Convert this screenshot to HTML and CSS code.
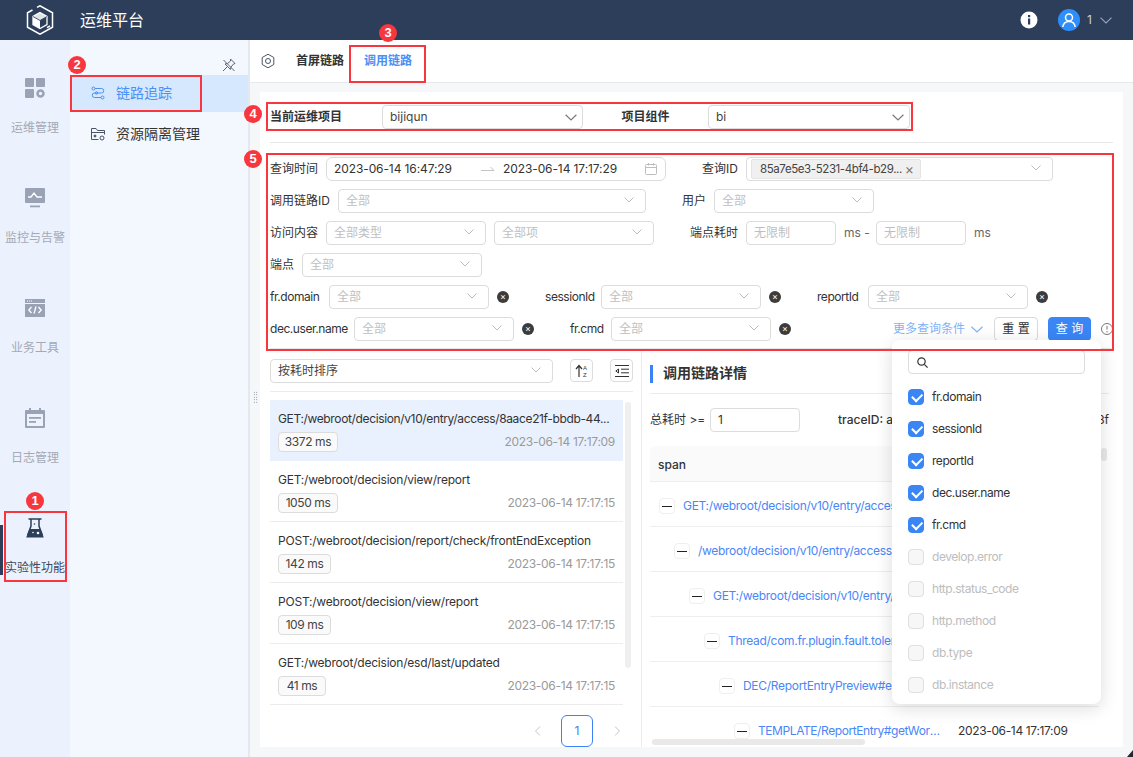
FILE: index.html
```html
<!DOCTYPE html>
<html lang="zh">
<head>
<meta charset="utf-8">
<title>运维平台</title>
<link rel="stylesheet" href="styles.css">
</head>
<body>
<div class="app">
  <header class="top">
    <svg class="logo" width="28" height="30" viewBox="0 0 28 30" fill="none" stroke="#fff"><path d="M11 2.400 14 .8l12.500 7v14.400L14 29.200 1.500 22.200V7.800l5-2.800M24 21l-3 1.700M8 24.500" stroke-width="1.500"/><path d="M14 7.500 21 11.500v8L14 23.500 7 19.500v-8z" stroke-width="1.300"/><path d="M7 11.500l7 4v8l-7-4z" fill="#fff" stroke="none"/><path d="M7 11.500 14 7.500l7 4-7 4z" fill="#fff" stroke="none" opacity=".85"/><path d="M7 11.500l7 4 7-4" stroke="#2c3e5a" stroke-width=".8"/></svg>
    <div class="brand">运维平台</div>
    <div class="top-right">
      <svg class="info" width="18" height="18" viewBox="0 0 18 18"><circle cx="9" cy="9" r="8.500" fill="#fff"/><rect x="8" y="7.500" width="2.200" height="6" fill="#2c3e5a"/><rect x="8" y="4" width="2.200" height="2.200" fill="#2c3e5a"/></svg>
      <svg class="avatar" width="22" height="22" viewBox="0 0 22 22" fill="none" stroke="#fff" stroke-width="1.500"><circle cx="11" cy="11" r="11" fill="#2f8ffa" stroke="none"/><circle cx="11" cy="8.500" r="3.500"/><path d="M4.800 18c.5-3.500 3-5.500 6.200-5.500s5.700 2 6.200 5.500"/></svg>
      <span class="uid">1</span>
      <svg width="12" height="7" viewBox="0 0 12 7" fill="none" stroke="#9aa5b8" stroke-width="1.100"><path d="M.5.700 6 6l5.500-5.300"/></svg>
    </div>
  </header>
  <div class="body">
    <nav class="rail">
      <a class="rail-item">
        <svg width="20" height="20" viewBox="0 0 20 20" fill="#9aa3b5"><rect x="0" y="0" width="9" height="9" rx="1"/><rect x="11" y="0" width="9" height="9" rx="1"/><rect x="0" y="11" width="9" height="9" rx="1"/><circle cx="15.500" cy="15.500" r="3" fill="none" stroke="#9aa3b5" stroke-width="2.500"/></svg>
        <span>运维管理</span>
      </a>
      <a class="rail-item">
        <svg width="20" height="20" viewBox="0 0 20 20"><rect x="0" y="0" width="20" height="15" rx="1" fill="#9aa3b5"/><path d="M3 9h3l3-4 3 4h5" fill="none" stroke="#fff" stroke-width="1.300"/><rect x="5" y="17.500" width="10" height="1.800" fill="#9aa3b5"/></svg>
        <span>监控与告警</span>
      </a>
      <a class="rail-item">
        <svg width="20" height="20" viewBox="0 0 20 20"><rect x="0" y="1" width="20" height="18" fill="#9aa3b5"/><rect x="0" y="5" width="20" height="1" fill="#edf3fd"/><path d="M6.500 9 3.800 12l2.700 3M13.500 9l2.700 3-2.700 3M11 8.500 9 15.500" fill="none" stroke="#fff" stroke-width="1.300"/><path d="M2 3h5" stroke="#fff" stroke-dasharray="1 1"/></svg>
        <span>业务工具</span>
      </a>
      <a class="rail-item">
        <svg width="20" height="20" viewBox="0 0 20 20"><rect x="0" y="2" width="20" height="18" rx="1" fill="#9aa3b5"/><rect x="4" y="0" width="2" height="4" fill="#9aa3b5"/><rect x="14" y="0" width="2" height="4" fill="#9aa3b5"/><rect x="2" y="6" width="16" height="12" fill="#edf3fd"/><rect x="4" y="9" width="12" height="1.800" fill="#9aa3b5"/><rect x="4" y="13" width="7" height="1.800" fill="#9aa3b5"/></svg>
        <span>日志管理</span>
      </a>
      <a class="rail-item active">
        <svg width="20" height="20" viewBox="0 0 20 20" fill="none" stroke="#2c3e5a" stroke-width="1.500"><path d="M3.500 1h13M6 1v7L2.500 17.500M14 1v7l3.500 9.500"/><path d="M4.800 11h10.400L18.800 19.500H1.200z" fill="#2c3e5a" stroke="none"/><circle cx="13" cy="15" r="1.300" fill="#fff" stroke="none"/><circle cx="8" cy="14.500" r=".8" fill="#fff" stroke="none"/><circle cx="9.500" cy="6" r=".8" fill="#2c3e5a" stroke="none"/></svg>
        <span>实验性功能</span>
      </a>
    </nav>
    <aside class="menu">
      <div class="pin-row">
        <svg width="14" height="14" viewBox="0 0 14 14" fill="none" stroke="#5b6577"><path d="M8.500 1 13 5.500l-1.500.5-2.500 3-.5 2.500L3 6l2.500-.5 3-2.500zM5.500 8.500 1 13M1.500 2l11 11"/></svg>
      </div>
      <a class="menu-item on">
        <svg width="14" height="14" viewBox="0 0 14 14" fill="none" stroke="currentColor"><circle cx="2.500" cy="2.500" r="1.500"/><path d="M4 2.500h6.500a2 2 0 0 1 0 4.500H3.500a2 2 0 0 0 0 4.500H10"/><circle cx="11.500" cy="11.500" r="1.500"/><circle cx="5.500" cy="7" r="1.200"/></svg>
        <span>链路追踪</span>
      </a>
      <a class="menu-item">
        <svg width="14" height="14" viewBox="0 0 14 14" fill="none" stroke="#4a5568"><path d="M.5 12.500v-11h4.500l1.500 2h7v4M.5 12.500h7M.5 5.500h13"/><circle cx="11" cy="11" r="2"/><circle cx="4" cy="9" r="1" fill="#4a5568"/></svg>
        <span>资源隔离管理</span>
      </a>
    </aside>
    <main class="main">
      <div class="tabs">
        <svg class="gear" width="16" height="16" viewBox="0 0 16 16" fill="none" stroke="#4a5568"><path d="M8 1.200 13.800 4.500v7L8 14.800 2.200 11.500v-7z" stroke-linejoin="round"/><circle cx="8" cy="8" r="2.500"/></svg>
        <a class="tab">首屏链路</a>
        <a class="tab sel">调用链路</a>
      </div>
      <div class="canvas">
        <div class="grip"></div>
        <section class="card">
          <div class="project">
            <label class="p-lbl">当前运维项目</label>
            <div class="sel-box dark w201">bijiqun<svg class="chev" width="12" height="7" viewBox="0 0 12 7" fill="none" stroke="#7a7a7a" stroke-width="1.200"><path d="M.6.700 6 6l5.400-5.300"/></svg></div>
            <label class="p-lbl2">项目组件</label>
            <div class="sel-box dark w202">bi<svg class="chev" width="12" height="7" viewBox="0 0 12 7" fill="none" stroke="#7a7a7a" stroke-width="1.200"><path d="M.6.700 6 6l5.400-5.300"/></svg></div>
          </div>
          <div class="filters">
            <div class="frow">
              <label class="l56">查询时间</label>
              <div class="range">
                <span class="r1">2023-06-14 16:47:29</span>
                <svg class="arrow" width="14" height="6" viewBox="0 0 14 6" fill="none" stroke="#c4c4c4"><path d="M0 4.500h13L9.500 1"/></svg>
                <span class="r2">2023-06-14 17:17:29</span>
                <svg class="cal" width="12" height="12" viewBox="0 0 12 12" fill="none" stroke="#bdbdbd"><rect x=".5" y="1.500" width="11" height="10" rx="1"/><path d="M.5 4.500h11M3.500 0v2.500M8.500 0v2.500"/></svg>
              </div>
              <label class="l44 ml36">查询ID</label>
              <div class="sel-box w307"><span class="chip"><span class="chip-t">85a7e5e3-5231-4bf4-b29...</span><i class="chip-x">×</i></span><svg class="chev sm" width="10" height="6" viewBox="0 0 10 6" fill="none" stroke="#bdbdbd"><path d="M.5.500 5 5 9.500.5"/></svg></div>
            </div>
            <div class="frow">
              <label class="l68">调用链路ID</label>
              <div class="sel-box ph w308">全部<svg class="chev sm" width="10" height="6" viewBox="0 0 10 6" fill="none" stroke="#bdbdbd"><path d="M.5.500 5 5 9.500.5"/></svg></div>
              <label class="l32 ml36">用户</label>
              <div class="sel-box ph w160">全部<svg class="chev sm" width="10" height="6" viewBox="0 0 10 6" fill="none" stroke="#bdbdbd"><path d="M.5.500 5 5 9.500.5"/></svg></div>
            </div>
            <div class="frow">
              <label class="l56">访问内容</label>
              <div class="sel-box ph w160">全部类型<svg class="chev sm" width="10" height="6" viewBox="0 0 10 6" fill="none" stroke="#bdbdbd"><path d="M.5.500 5 5 9.500.5"/></svg></div>
              <div class="sel-box ph w160 ml8">全部项<svg class="chev sm" width="10" height="6" viewBox="0 0 10 6" fill="none" stroke="#bdbdbd"><path d="M.5.500 5 5 9.500.5"/></svg></div>
              <label class="l56 ml36">端点耗时</label>
              <div class="num ph">无限制</div>
              <span class="unit u40">ms -</span>
              <div class="num ph">无限制</div>
              <span class="unit">ms</span>
            </div>
            <div class="frow">
              <label class="l32">端点</label>
              <div class="sel-box ph w180">全部<svg class="chev sm" width="10" height="6" viewBox="0 0 10 6" fill="none" stroke="#bdbdbd"><path d="M.5.500 5 5 9.500.5"/></svg></div>
            </div>
            <div class="frow">
              <label class="l59 lat">fr.domain</label>
              <div class="sel-box ph w160">全部<svg class="chev sm" width="10" height="6" viewBox="0 0 10 6" fill="none" stroke="#bdbdbd"><path d="M.5.500 5 5 9.500.5"/></svg></div>
              <i class="clr">×</i>
              <label class="l56 ml36 lat">sessionId</label>
              <div class="sel-box ph w160">全部<svg class="chev sm" width="10" height="6" viewBox="0 0 10 6" fill="none" stroke="#bdbdbd"><path d="M.5.500 5 5 9.500.5"/></svg></div>
              <i class="clr">×</i>
              <label class="l51 ml36 lat">reportId</label>
              <div class="sel-box ph w160">全部<svg class="chev sm" width="10" height="6" viewBox="0 0 10 6" fill="none" stroke="#bdbdbd"><path d="M.5.500 5 5 9.500.5"/></svg></div>
              <i class="clr">×</i>
            </div>
            <div class="frow">
              <label class="l84 lat">dec.user.name</label>
              <div class="sel-box ph w160">全部<svg class="chev sm" width="10" height="6" viewBox="0 0 10 6" fill="none" stroke="#bdbdbd"><path d="M.5.500 5 5 9.500.5"/></svg></div>
              <i class="clr">×</i>
              <label class="l41 ml36 lat">fr.cmd</label>
              <div class="sel-box ph w160">全部<svg class="chev sm" width="10" height="6" viewBox="0 0 10 6" fill="none" stroke="#bdbdbd"><path d="M.5.500 5 5 9.500.5"/></svg></div>
              <i class="clr">×</i>
              <div class="actions">
                <a class="more">更多查询条件</a>
                <svg class="more-chev" width="12" height="7" viewBox="0 0 12 7" fill="none" stroke="#7fb2fb" stroke-width="1.200"><path d="M.5.700 6 6l5.500-5.300"/></svg>
                <button class="btn">重 置</button>
                <button class="btn pri">查 询</button>
                <svg class="tip" width="12" height="12" viewBox="0 0 12 12" fill="none" stroke="#777"><circle cx="6" cy="6" r="5.500"/><path d="M6 2.800v3.800M6 8v1.400"/></svg>
              </div>
            </div>
          </div>
          <div class="split">
            <div class="left">
              <div class="lhead">
                <div class="sel-box dark w283">按耗时排序<svg class="chev sm" width="10" height="6" viewBox="0 0 10 6" fill="none" stroke="#bdbdbd"><path d="M.5.500 5 5 9.500.5"/></svg></div>
                <button class="ibtn"><svg width="14" height="14" viewBox="0 0 14 14" fill="none" stroke="#333" stroke-width="1.200"><path d="M4 13V2M1 5l3-3.500L7 5"/><text x="8" y="6" font-size="6" fill="#333" stroke="none" font-family="Liberation Sans">A</text><text x="8" y="13" font-size="6" fill="#333" stroke="none" font-family="Liberation Sans">Z</text></svg></button>
                <button class="ibtn"><svg width="14" height="12" viewBox="0 0 14 12" fill="none" stroke="#333"><path d="M0 .5h14M6 4.200h8M6 7.800h8M0 11.500h14M3.500 4 .8 6l2.700 2z"/></svg></button>
              </div>
              <div class="list-wrap">
                <ul class="list">
                  <li class="li cur"><div class="li-t long">GET:/webroot/decision/v10/entry/access/8aace21f-bbdb-44...</div><div class="li-b"><span class="tag w60">3372 ms</span><time>2023-06-14 17:17:09</time></div></li>
                  <li class="li"><div class="li-t">GET:/webroot/decision/view/report</div><div class="li-b"><span class="tag w60">1050 ms</span><time>2023-06-14 17:17:15</time></div></li>
                  <li class="li"><div class="li-t">POST:/webroot/decision/report/check/frontEndException</div><div class="li-b"><span class="tag w53">142 ms</span><time>2023-06-14 17:17:15</time></div></li>
                  <li class="li"><div class="li-t">POST:/webroot/decision/view/report</div><div class="li-b"><span class="tag w53">109 ms</span><time>2023-06-14 17:17:15</time></div></li>
                  <li class="li"><div class="li-t">GET:/webroot/decision/esd/last/updated</div><div class="li-b"><span class="tag w48">41 ms</span><time>2023-06-14 17:17:15</time></div></li>
                </ul>
                <div class="vbar"></div>
              </div>
              <div class="pager">
                <svg width="7" height="10" viewBox="0 0 7 10" fill="none" stroke="#c4c4c4"><path d="M6 .5 1.500 5 6 9.500"/></svg>
                <span class="page">1</span>
                <svg width="7" height="10" viewBox="0 0 7 10" fill="none" stroke="#c4c4c4"><path d="M1 .5 5.500 5 1 9.500"/></svg>
              </div>
            </div>
            <div class="right">
              <div class="rhead"><h2 class="rtitle">调用链路详情</h2></div>
              <div class="meta">
                <label class="m-lbl">总耗时 &gt;=</label>
                <div class="num m-num">1</div>
                <span class="trace">traceID: ac</span>
                <span class="trace-end">3f</span>
              </div>
              <div class="table">
                <div class="thead"><span>span</span></div>
                <div class="tr"><div class="td narrow d0"><i class="fold"></i><a>GET:/webroot/decision/v10/entry/access/8aace21f</a></div></div>
                <div class="tr"><div class="td narrow d1"><i class="fold"></i><a>/webroot/decision/v10/entry/access/8aace21f</a></div></div>
                <div class="tr"><div class="td narrow d2"><i class="fold"></i><a>GET:/webroot/decision/v10/entry/access/8aace21f</a></div></div>
                <div class="tr"><div class="td narrow d3"><i class="fold"></i><a>Thread/com.fr.plugin.fault.tolerance.run</a></div></div>
                <div class="tr"><div class="td narrow d4"><i class="fold"></i><a>DEC/ReportEntryPreview#entry</a></div></div>
                <div class="tr"><div class="td d5"><i class="fold"></i><a>TEMPLATE/ReportEntry#getWorkBookEntry</a></div><time>2023-06-14 17:17:09</time></div>
                <i class="hthumb"></i>
              </div>
              <i class="vthumb"></i>
            </div>
          </div>
        </section>
      </div>
    </main>
  </div>

  <div class="drop">
    <div class="search"><svg width="11" height="11" viewBox="0 0 11 11" fill="none" stroke="#333" stroke-width="1.200"><circle cx="4.500" cy="4.500" r="3.700"/><path d="m7.300 7.300 3.300 3.300"/></svg></div>
    <div class="opt"><i class="cb on"></i>fr.domain</div>
    <div class="opt"><i class="cb on"></i>sessionId</div>
    <div class="opt"><i class="cb on"></i>reportId</div>
    <div class="opt"><i class="cb on"></i>dec.user.name</div>
    <div class="opt"><i class="cb on"></i>fr.cmd</div>
    <div class="opt off"><i class="cb"></i>develop.error</div>
    <div class="opt off"><i class="cb"></i>http.status_code</div>
    <div class="opt off"><i class="cb"></i>http.method</div>
    <div class="opt off"><i class="cb"></i>db.type</div>
    <div class="opt off"><i class="cb"></i>db.instance</div>
  </div>

  <div class="box b1"></div><div class="box b2"></div><div class="box b3"></div><div class="box b4"></div><div class="box b5"></div>
  <div class="dot n1">1</div><div class="dot n2">2</div><div class="dot n3">3</div><div class="dot n4">4</div><div class="dot n5">5</div>
  <i class="corner"></i>
</div>
</body>
</html>
```
FILE: styles.css
```css
* { box-sizing: border-box; }
html, body { margin: 0; height: 100%; overflow: hidden; }
body { font: 12px/16px Inter, "Noto Sans CJK SC", sans-serif; color: #333; background: #f6f7f9; }
ul { list-style: none; margin: 0; padding: 0; }
i { font-style: normal; }
label { white-space: nowrap; }
button { font: inherit; cursor: pointer; }
.lat { letter-spacing: -.45px; }

.app { position: relative; width: 1133px; height: 757px; display: flex; flex-direction: column; overflow: hidden; }

/* top bar */
.top { height: 40px; flex: none; background: #2c3e5a; display: flex; align-items: center; padding-left: 26px; color: #fff; }
.brand { margin-left: 26px; font-size: 16px; }
.top-right { margin-left: auto; display: flex; align-items: center; padding-right: 21px; }
.avatar { margin-left: 20px; }
.uid { margin-left: 7px; width: 10px; color: #c9d1dd; }
.top-right > svg:last-child { margin-left: 3px; }

.body { flex: 1; display: flex; min-height: 0; }

/* icon rail */
.rail { width: 70px; flex: none; background: #ecf2fd; }
.rail-item { position: relative; height: 110px; display: flex; flex-direction: column; align-items: center; padding-top: 38px; color: #a3a9b5; white-space: nowrap; }
.rail-item span { margin-top: 22px; }
.rail-item.active { color: #3b4a63; }
.rail-item.active::before { content: ""; position: absolute; left: 0; top: 45px; width: 3px; height: 50px; background: #2c3e5a; }

/* side menu */
.menu { width: 180px; flex: none; background: #f3f7fe; border-right: 2px solid #e4e8ef; }
.pin-row { height: 35px; display: flex; justify-content: flex-end; align-items: flex-end; padding: 0 12px 3px 0; }
.menu-item { height: 37px; display: flex; align-items: center; padding: 0 0 2px 21px; font-size: 14px; color: #333; gap: 11px; margin-bottom: 4px; }
.menu-item.on { background: #d6e8fd; color: #4a90f5; }

/* main */
.main { flex: 1; min-width: 0; display: flex; flex-direction: column; background: #f6f7f9; }
.tabs { height: 43px; flex: none; background: #fff; border-bottom: 1px solid #e6e8ec; display: flex; padding-left: 10px; align-items: stretch; }
.gear { align-self: center; margin-right: 10px; }
.tab { padding: 13px 0 0; font-weight: 600; color: #333; border-bottom: 2px solid transparent; width: 68px; text-align: center; margin-bottom: -1px; }
.tab.sel { color: #4a8ff5; border-bottom-color: #3b82f6; }

.canvas { flex: 1; min-height: 0; padding: 9px 10px 10px; position: relative; }
.grip { position: absolute; left: 3px; top: 308px; width: 5px; height: 13px; background-image: radial-gradient(#5a6a90 .7px, transparent .8px); background-size: 2.500px 2.500px; }
.card { height: 100%; background: #fff; padding: 13px 10px 0; display: flex; flex-direction: column; }

.project { display: flex; align-items: center; height: 24px; flex: none; }
.p-lbl { width: 112px; font-weight: 600; }
.p-lbl2 { width: 125px; text-align: center; font-weight: 600; }
.filters { margin-top: 13px; padding-top: 14px; border-top: 1px solid #e8e8e8; display: flex; flex-direction: column; gap: 8px; flex: none; }
.frow { display: flex; align-items: center; height: 24px; }
.ml36 { margin-left: 36px; } .ml8 { margin-left: 8px; }
.l32 { width: 32px; } .l41 { width: 41px; } .l44 { width: 44px; } .l51 { width: 51px; } .l56 { width: 56px; } .l59 { width: 59px; } .l68 { width: 68px; } .l84 { width: 84px; }

.sel-box { position: relative; height: 24px; border: 1px solid #dcdcdc; border-radius: 4px; padding-left: 7px; display: flex; align-items: center; background: #fff; flex: none; white-space: nowrap; }
.sel-box.dark { color: #444; }
.ph { color: #bfbfbf; }
.chev { position: absolute; right: 5px; top: 8px; }
.chev.sm { right: 11px; top: 7px; }
.w160 { width: 160px; } .w180 { width: 180px; } .w201 { width: 201px; } .w202 { width: 202px; } .w283 { width: 283px; } .w307 { width: 307px; } .w308 { width: 308px; }

.range { width: 340px; height: 24px; border: 1px solid #dcdcdc; border-radius: 6px; display: flex; align-items: center; padding-left: 7px; flex: none; color: #333; }
.r1 { width: 147px; white-space: nowrap; letter-spacing: -.1px; }
.arrow { margin-right: 8px; }
.r2 { width: 142px; white-space: nowrap; letter-spacing: -.1px; }
.chip { display: inline-flex; align-items: center; justify-content: space-between; height: 20px; padding: 0 6px 0 8px; margin-left: -3px; background: #f0f0f0; border: 1px solid #e4e4e4; border-radius: 2px; color: #444; width: 170px; white-space: nowrap; }
.chip-t { font-size: 11.500px; letter-spacing: -.4px; }
.chip-x { color: #777; font-size: 14px; }

.num { width: 90px; height: 24px; border: 1px solid #dcdcdc; border-radius: 4px; padding-left: 7px; display: flex; align-items: center; flex: none; }
.unit { margin-left: 8px; color: #666; }
.u40 { width: 32px; }
.clr { width: 12px; height: 12px; margin-left: 8px; border-radius: 50%; background: #3c3c3c; color: #fff; font-size: 9px; line-height: 12px; text-align: center; flex: none; }

.actions { margin-left: auto; display: flex; align-items: center; }
.more { color: #7fb2fb; white-space: nowrap; }
.more-chev { margin: 0 11px 0 6px; }
.btn { width: 44px; height: 24px; padding: 0; border: 1px solid #d9d9d9; border-radius: 4px; background: #fff; color: #333; }
.btn.pri { margin-left: 10px; background: #3a86f5; border-color: #3a86f5; color: #fff; width: 43px; }
.tip { margin-left: 10px; }

/* split */
.split { flex: 1; min-height: 0; margin-top: 7px; border-top: 1px solid #e8e8e8; display: flex; }
.left { width: 372px; flex: none; border-right: 1px solid #ececec; padding-right: 8px; display: flex; flex-direction: column; }
.lhead { height: 43px; flex: none; padding-top: 10px; border-bottom: 1px solid #ececec; display: flex; }
.ibtn { width: 23px; height: 23px; padding: 0; border: 1px solid #dcdcdc; border-radius: 4px; background: #fff; display: flex; align-items: center; justify-content: center; margin-left: 17px; }
.list-wrap { margin-top: 8px; display: flex; height: 305px; flex: none; }
.list { width: 353px; flex: none; }
.li { height: 61px; padding: 10px 8px 0; border-bottom: 1px solid #ececec; }
.li.cur { background: #e9f1fe; border-bottom-color: transparent; }
.li-t { color: #333; white-space: nowrap; height: 18px; line-height: 18px; letter-spacing: -.22px; }
.li-t.long { letter-spacing: -.36px; }
.li-b { margin-top: 4px; display: flex; justify-content: space-between; align-items: center; }
.li-b time { color: #9a9a9a; letter-spacing: -.3px; }
.tag { height: 20px; line-height: 18px; border: 1px solid #dcdcdc; border-radius: 4px; background: #fafafa; text-align: center; color: #444; letter-spacing: -.4px; }
.w60 { width: 60px; } .w53 { width: 53px; } .w48 { width: 48px; }
.vbar { width: 6px; height: 266px; margin: 2px 0 0 2px; background: #efefef; border-radius: 3px; }
.pager { margin-top: 10px; display: flex; align-items: center; justify-content: flex-end; padding-right: 12px; }
.page { width: 32px; height: 32px; margin: 0 21px 0 20px; border: 1px solid #3b82f6; border-radius: 6px; color: #3b82f6; display: flex; align-items: center; justify-content: center; }

.right { position: relative; flex: 1; min-width: 0; padding: 0 4px 0 8px; display: flex; flex-direction: column; overflow: hidden; }
.rhead { height: 45px; flex: none; border-bottom: 1px solid #ececec; padding-top: 16px; }
.rtitle { margin: 0; height: 18px; padding-left: 10px; border-left: 3px solid #3b82f6; font-size: 14px; line-height: 15px; font-weight: 600; }
.meta { height: 52px; flex: none; display: flex; align-items: center; }
.m-lbl { width: 60px; }
.m-num { width: 90px; }
.trace { margin-left: 38px; width: 54px; overflow: hidden; white-space: nowrap; font-weight: 500; flex: none; }
.trace-end { margin-left: auto; }

.table { position: relative; flex: 1; min-height: 0; margin-right: 10px; overflow: hidden; }
.thead { height: 36px; padding: 11px 8px 9px; background: #fafafa; border-bottom: 1px solid #eee; border-radius: 6px 6px 0 0; font-weight: 500; }
.tr { height: 45px; padding-top: 4px; border-bottom: 1px solid #eee; display: flex; align-items: center; }
.td { width: 308px; flex: none; display: flex; align-items: center; padding-right: 17px; overflow: hidden; }
.td.narrow { width: 242px; padding-right: 0; }
.td a { color: #4a86f7; overflow: hidden; text-overflow: ellipsis; white-space: nowrap; letter-spacing: -.3px; }
.td.d5 a { letter-spacing: -.42px; }
.td.narrow a { text-overflow: clip; }
.tr time { color: #333; white-space: nowrap; letter-spacing: -.35px; }
.fold { position: relative; width: 16px; height: 16px; flex: none; margin-right: 8px; border: 1px solid #eee; border-radius: 4px; background: #fff; }
.fold::after { content: ""; position: absolute; left: 2px; right: 2px; top: 6.500px; height: 1.500px; background: #222; }
.d0 { padding-left: 9px; } .d1 { padding-left: 24px; } .d2 { padding-left: 39px; } .d3 { padding-left: 54px; } .d4 { padding-left: 69px; } .d5 { padding-left: 84px; }
.hthumb { position: absolute; left: 2px; top: 293px; width: 213px; height: 6px; background: #e9e9e9; border-radius: 3px; }
.vthumb { position: absolute; left: 459px; top: 99px; width: 6px; height: 13px; background: #e9e9e9; border-radius: 3px; }

/* dropdown */
.drop { position: absolute; left: 892px; top: 340px; width: 209px; height: 364px; background: #fff; border-radius: 8px; box-shadow: 0 4px 18px rgba(0,0,0,.14); padding: 10px 16px 0; }
.search { height: 24px; margin-bottom: 7px; border: 1px solid #dcdcdc; border-radius: 4px; display: flex; align-items: center; padding-left: 8px; }
.opt { height: 32px; display: flex; align-items: center; color: #333; letter-spacing: -.45px; }
.opt.off { color: #bdbdbd; }
.cb { width: 16px; height: 16px; margin-right: 8px; border-radius: 4px; border: 1px solid #dfdfdf; background: #f7f7f7; position: relative; flex: none; }
.cb.on { background: #3a86f5; border-color: #3a86f5; }
.cb.on::after { content: ""; position: absolute; left: 3px; top: 2.500px; width: 8px; height: 4.500px; border-left: 2px solid #fff; border-bottom: 2px solid #fff; transform: rotate(-45deg); }

/* annotations */
.box { position: absolute; border: 2px solid #f8363e; pointer-events: none; }
.b1 { left: 4px; top: 511px; width: 63px; height: 71px; }
.b2 { left: 70px; top: 75px; width: 132px; height: 37px; }
.b3 { left: 349px; top: 45px; width: 77px; height: 38px; }
.b4 { left: 266px; top: 102px; width: 647px; height: 29px; }
.b5 { left: 266px; top: 153px; width: 848px; height: 198px; }
.dot { position: absolute; width: 18px; height: 18px; border-radius: 50%; background: #f8363e; color: #fff; font: 700 13px/18px "Liberation Sans", sans-serif; text-align: center; }
.n1 { left: 26px; top: 492px; }
.n2 { left: 68px; top: 56px; }
.n3 { left: 379px; top: 24px; }
.n4 { left: 244px; top: 105px; }
.n5 { left: 244px; top: 150px; }
.corner { position: absolute; right: 0; bottom: 0; width: 6px; height: 7px; background: #2a2333; clip-path: polygon(100% 0, 100% 100%, 0 100%); }
```
